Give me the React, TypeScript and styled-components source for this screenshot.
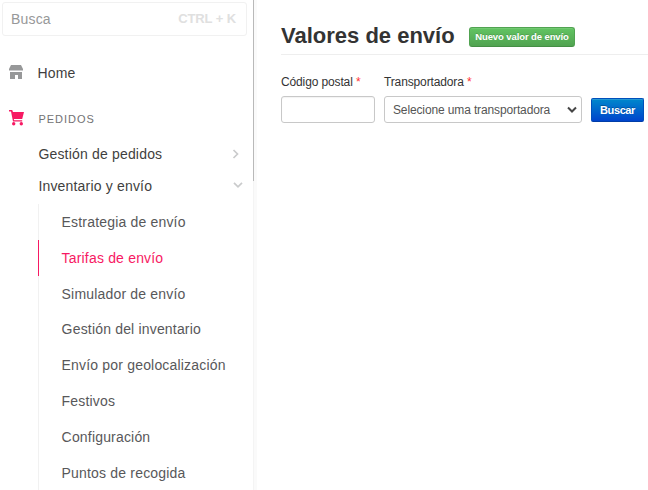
import React from "react";
import styled, { createGlobalStyle } from "styled-components";

const GlobalStyle = createGlobalStyle`
  * { box-sizing: border-box; }
  body {
    margin: 0;
    background: #fff;
    overflow: hidden;
    font-family: "Liberation Sans", Arial, sans-serif;
  }
`;

const Page = styled.div`
  display: flex;
  width: 648px;
  height: 490px;
  overflow: hidden;
`;

const Sidebar = styled.nav`
  flex: none;
  width: 253px;
  height: 490px;
  overflow: hidden;
  color: #3f3f40;
  font-size: 14px;
  letter-spacing: 0.18px;
  white-space: nowrap;
`;

const ScrollTrack = styled.div`
  flex: none;
  width: 4px;
  height: 490px;
  background: #fafafa;
  border-left: 1px solid #f4f4f4;
`;

const ScrollThumb = styled.div`
  width: 1px;
  height: 181px;
  margin-left: -1px;
  background: #b9b9b9;
`;

const SearchBox = styled.div`
  display: flex;
  align-items: center;
  justify-content: space-between;
  width: 245px;
  height: 34px;
  margin: 2px 0 0 2px;
  padding: 0 10px 0 8px;
  border: 1px solid #f1f1f1;
  border-radius: 3px;
  color: #979899;
`;

const Shortcut = styled.span`
  color: #e0e0e0;
  font-weight: bold;
  font-size: 13px;
  letter-spacing: -0.2px;
  word-spacing: 0.3px;
  margin-top: -2px;
`;

const HomeRow = styled.a`
  display: flex;
  align-items: center;
  height: 20px;
  margin-top: 27px;
  padding-left: 9px;
`;

const SectionRow = styled.div`
  display: flex;
  align-items: center;
  height: 20px;
  margin-top: 26px;
  padding-left: 9px;
  color: #727273;
  font-size: 11px;
  letter-spacing: 1px;
`;

const IconSlot = styled.span<{ $width: number }>`
  display: flex;
  width: ${(p) => p.$width}px;

  svg { display: block; margin-top: -2px; }
`;

const GroupRow = styled.div`
  display: flex;
  align-items: center;
  justify-content: space-between;
  height: 32px;
  padding: 0 10px 0 38.4px;

  svg { display: block; margin-top: -1px; }
`;

const Groups = styled.div`
  margin-top: 9px;
`;

const SubMenu = styled.ul`
  list-style: none;
  margin: 2px 0 0 38px;
  padding: 0;
`;

const SubItem = styled.li<{ $active?: boolean }>`
  height: 35.8px;
  padding: 1px 0 0 22.6px;
  line-height: 35.8px;
  border-left: 1px solid ${(p) => (p.$active ? "#f71963" : "#f1f1f1")};
  color: ${(p) => (p.$active ? "#f71963" : "#58585a")};
`;

const Main = styled.main`
  flex: 1;
  min-width: 0;
  padding: 20px 0 0 24px;
  color: #333;
`;

const Heading = styled.header`
  display: flex;
  height: 35px;
  border-bottom: 1px solid #eee;
`;

const Title = styled.h1`
  margin: 0;
  width: 188px;
  font-size: 22px;
  line-height: 32px;
  letter-spacing: 0;
  white-space: nowrap;
`;

const NewButton = styled.button`
  width: 106px;
  height: 20px;
  margin-top: 7px;
  padding: 0 0 1px;
  border: 1px solid #51a351;
  border-bottom-color: #458f45;
  border-radius: 3px;
  background: linear-gradient(#62c462, #51a351);
  box-shadow: inset 0 1px 0 rgba(255, 255, 255, 0.1);
  color: #fff;
  font: bold 9.5px "Liberation Sans", Arial, sans-serif;
  letter-spacing: -0.1px;
  text-shadow: 0 -1px 0 rgba(0, 0, 0, 0.15);
  white-space: nowrap;
`;

const Form = styled.form`
  display: flex;
  gap: 9px;
  margin-top: 20px;
`;

const Field = styled.label<{ $width: number }>`
  display: block;
  width: ${(p) => p.$width}px;
  font-size: 12px;
  line-height: 14px;
  letter-spacing: -0.13px;
  white-space: nowrap;
`;

const Required = styled.span`
  color: #f33;
`;

const TextInput = styled.input`
  display: block;
  width: 100%;
  height: 27px;
  margin-top: 7px;
  border: 1px solid #c8c8c8;
  border-radius: 3px;
  box-shadow: inset 0 1px 1px rgba(0, 0, 0, 0.05);
`;

const SelectBox = styled.div`
  display: flex;
  align-items: center;
  justify-content: space-between;
  width: 100%;
  height: 27px;
  margin-top: 7px;
  padding: 0 4px 0 8px;
  border: 1px solid #c8c8c8;
  border-radius: 3px;
  color: #555;
`;

const SubmitButton = styled.button`
  align-self: flex-end;
  width: 53px;
  height: 24px;
  margin-bottom: 1px;
  padding: 0;
  border: 1px solid #0050bb;
  border-bottom-color: #003da8;
  border-radius: 2px;
  background: linear-gradient(#0088cc, #0044cc);
  box-shadow: inset 0 1px 0 rgba(255, 255, 255, 0.15);
  color: #fff;
  font: bold 11px "Liberation Sans", Arial, sans-serif;
  letter-spacing: -0.4px;
  text-shadow: 0 -1px 0 rgba(0, 0, 0, 0.25);
`;

const StoreIcon = () => (
  <svg width="14" height="14" viewBox="0 0 14 14" fill="#979899">
    <path d="M2 0h10l2 4v1.5H0V4zM1 7h12v7H9v-4H6v4H1z" />
  </svg>
);

const CartIcon = () => (
  <svg width="16" height="16" viewBox="0 0 16 16" fill="#f71963">
    <path d="M0 0h3.2l.8 2H15l-1.8 7H4.8l.4 1.2h8v1.2H4L2 1.4H0z" />
    <circle cx="4.7" cy="13.7" r="1.7" />
    <circle cx="12.3" cy="13.7" r="1.7" />
  </svg>
);

const ChevronRight = () => (
  <svg width="14" height="10" viewBox="0 0 14 10" fill="none" stroke="#cacbcc" strokeWidth="1.7">
    <path d="M4.5 1l4 4-4 4" />
  </svg>
);

const ChevronDown = () => (
  <svg width="10" height="10" viewBox="0 0 10 10" fill="none" stroke="#cacbcc" strokeWidth="1.7">
    <path d="M1 1.8l4 4 4-4" />
  </svg>
);

const SelectArrow = () => (
  <svg width="10" height="8" viewBox="0 0 10 8" fill="none" stroke="#454545" strokeWidth="2">
    <path d="M1 1.5l4 4 4-4" />
  </svg>
);

const shippingLinks = [
  "Estrategia de envío",
  "Tarifas de envío",
  "Simulador de envío",
  "Gestión del inventario",
  "Envío por geolocalización",
  "Festivos",
  "Configuración",
  "Puntos de recogida",
];

export default function App() {
  return (
    <Page>
      <GlobalStyle />
      <Sidebar>
        <SearchBox>
          <span>Busca</span>
          <Shortcut>CTRL + K</Shortcut>
        </SearchBox>
        <HomeRow>
          <IconSlot $width={28.4}><StoreIcon /></IconSlot>
          Home
        </HomeRow>
        <SectionRow>
          <IconSlot $width={29.4}><CartIcon /></IconSlot>
          PEDIDOS
        </SectionRow>
        <Groups>
          <GroupRow>Gestión de pedidos<ChevronRight /></GroupRow>
          <GroupRow>Inventario y envío<ChevronDown /></GroupRow>
        </Groups>
        <SubMenu>
          {shippingLinks.map((label) => (
            <SubItem key={label} $active={label === "Tarifas de envío"}>{label}</SubItem>
          ))}
        </SubMenu>
      </Sidebar>
      <ScrollTrack><ScrollThumb /></ScrollTrack>
      <Main>
        <Heading>
          <Title>Valores de envío</Title>
          <NewButton>Nuevo valor de envío</NewButton>
        </Heading>
        <Form>
          <Field $width={94}>
            Código postal <Required>*</Required>
            <TextInput />
          </Field>
          <Field $width={198}>
            Transportadora <Required>*</Required>
            <SelectBox>Selecione uma transportadora<SelectArrow /></SelectBox>
          </Field>
          <SubmitButton type="button">Buscar</SubmitButton>
        </Form>
      </Main>
    </Page>
  );
}
